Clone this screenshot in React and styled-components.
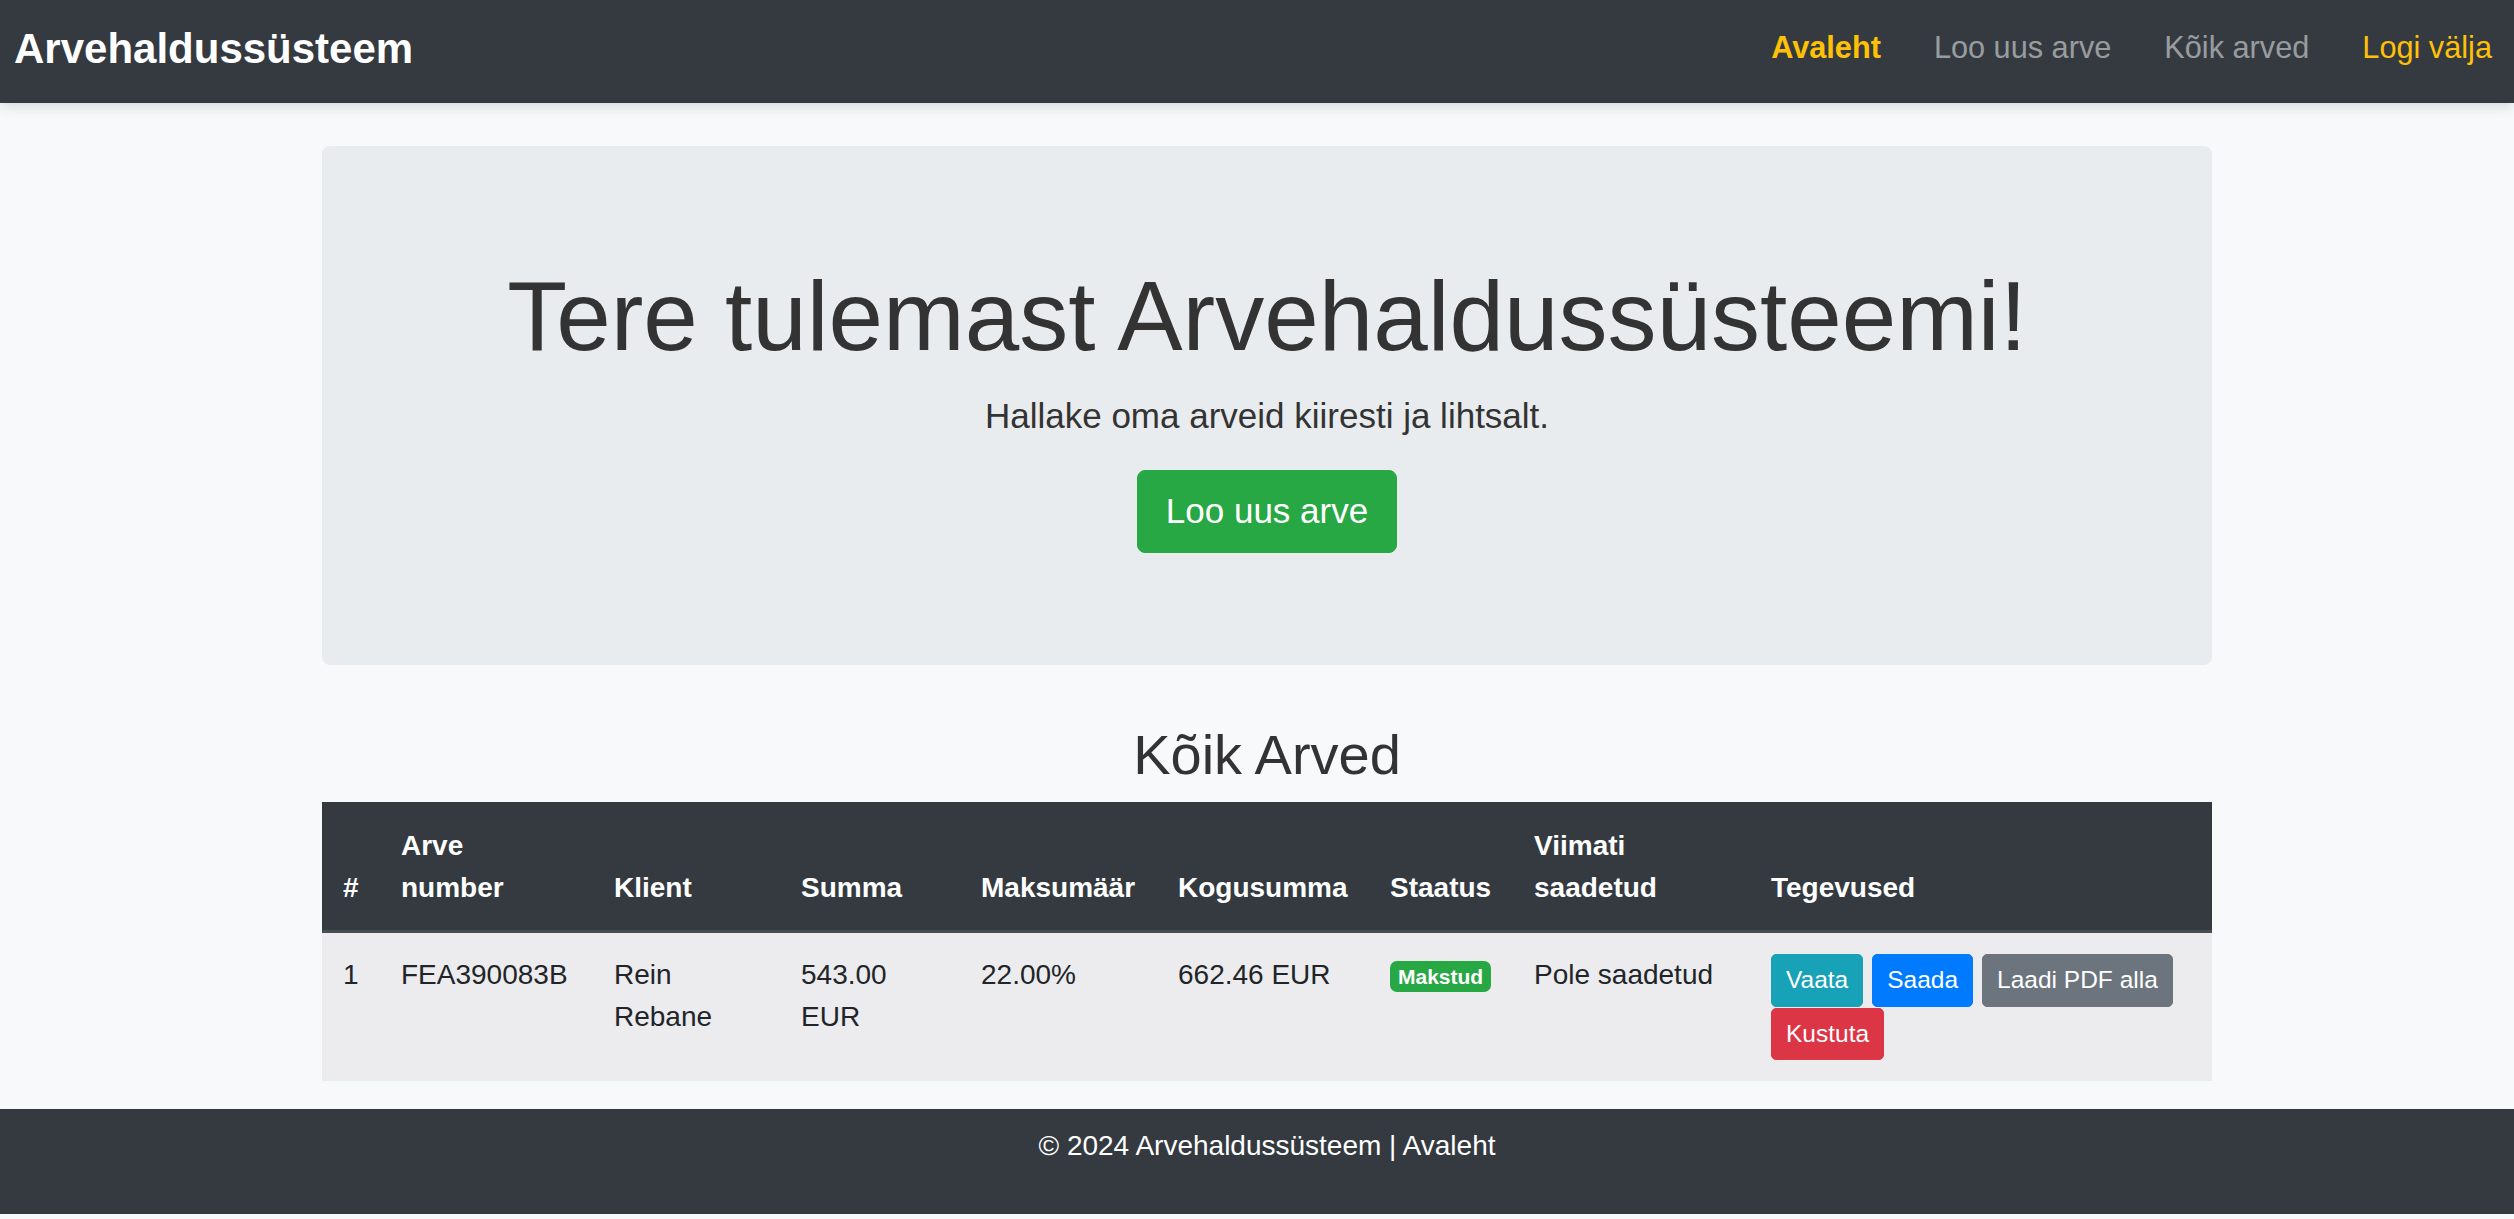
import React from 'react'
import styled, { createGlobalStyle } from 'styled-components'

const GlobalStyle = createGlobalStyle`
  * { box-sizing: border-box; }
  body {
    margin: 0;
    background: #f8f9fa;
    color: #212529;
    font-family: "Liberation Sans", Arial, sans-serif;
    font-size: 28px;
    line-height: 1.5;
  }
`

const Navbar = styled.nav`
  height: 103px;
  display: flex;
  align-items: center;
  justify-content: space-between;
  padding: 0 22px 6px 14px;
  background: #343a40;
  box-shadow: 0 4px 12px rgba(0, 0, 0, 0.12);
  position: relative;
  z-index: 1;
`

const Brand = styled.a`
  color: #fff;
  font-size: 42px;
  font-weight: 700;
  text-decoration: none;
  line-height: 1.5;
`

const NavLinks = styled.div`
  display: flex;
  align-items: center;
  gap: 53px;
`

const NavLink = styled.a`
  font-size: 30.7px;
  text-decoration: none;
  color: ${(p) => (p.$accent ? '#ffc107' : 'rgba(255, 255, 255, 0.5)')};
  font-weight: ${(p) => (p.$active ? 700 : 400)};
`

const Main = styled.main`
  margin: 43px 302px 0 322px;
`

const Jumbotron = styled.section`
  background: #e9ecef;
  border-radius: 8px;
  padding: 112px 56px;
  margin-bottom: 56px;
  text-align: center;
  color: #333;
`

const Title = styled.h1`
  margin: 0 0 14px;
  font-size: 98px;
  font-weight: 300;
  line-height: 1.2;
`

const Lead = styled.p`
  margin: 0 0 28px;
  font-size: 35px;
  line-height: 1.5;
`

const BigButton = styled.a`
  display: inline-block;
  padding: 14px 28px;
  border: 1px solid #28a745;
  border-radius: 8px;
  background: #28a745;
  color: #fff;
  font-size: 35px;
  line-height: 1.5;
  text-decoration: none;
`

const SectionTitle = styled.h2`
  margin: 0 0 14px;
  font-size: 56px;
  font-weight: 400;
  line-height: 1.2;
  text-align: center;
  color: #333;
`

const Table = styled.table`
  width: 100%;
  table-layout: fixed;
  border-collapse: collapse;
  margin-bottom: 28px;
`

const Th = styled.th`
  width: ${(p) => p.$w}px;
  padding: 21px;
  text-align: left;
  vertical-align: bottom;
  color: #fff;
  background: #343a40;
  font-weight: 700;
  border-top: 2px solid #343a40;
  border-bottom: 3px solid #454d55;
`

const Row = styled.tr`
  background: #ececee;
`

const Td = styled.td`
  padding: 21px;
  vertical-align: top;
  color: #212529;
`

const Badge = styled.span`
  display: inline-block;
  padding: 5px 8px;
  border-radius: 7px;
  background: #28a745;
  color: #fff;
  font-size: 21px;
  font-weight: 700;
  line-height: 1;
`

const Actions = styled.div`
  display: flex;
  flex-wrap: wrap;
  column-gap: 9px;
  row-gap: 1px;
`

const SmallButton = styled.a`
  display: inline-block;
  padding: 7px 14px;
  border: 1px solid ${(p) => p.$bg};
  border-radius: 5px;
  background: ${(p) => p.$bg};
  color: #fff;
  font-size: 24.5px;
  line-height: 1.5;
  text-decoration: none;
`

const Footer = styled.footer`
  background: #343a40;
  color: #fff;
  text-align: center;
  padding: 16px 0 19px 20px;
  margin-bottom: 7px;
`

const FooterText = styled.p`
  margin: 0 0 28px;
`

const columns = [
  ['#', 58],
  [<>Arve<br />number</>, 213],
  ['Klient', 187],
  ['Summa', 180],
  ['Maksumäär', 197],
  ['Kogusumma', 212],
  ['Staatus', 144],
  ['Viimati saadetud', 237],
  ['Tegevused', 462],
]

const invoices = [
  {
    id: 1,
    number: 'FEA390083B',
    client: 'Rein Rebane',
    sum: '543.00 EUR',
    rate: '22.00%',
    total: '662.46 EUR',
    status: 'Makstud',
    sent: 'Pole saadetud',
  },
]

const App = () => {
  return (
    <>
      <GlobalStyle />
      <Navbar>
        <Brand href="#">Arvehaldussüsteem</Brand>
        <NavLinks>
          <NavLink href="#" $accent $active>Avaleht</NavLink>
          <NavLink href="#">Loo uus arve</NavLink>
          <NavLink href="#">Kõik arved</NavLink>
          <NavLink href="#" $accent>Logi välja</NavLink>
        </NavLinks>
      </Navbar>

      <Main>
        <Jumbotron>
          <Title>Tere tulemast Arvehaldussüsteemi!</Title>
          <Lead>Hallake oma arveid kiiresti ja lihtsalt.</Lead>
          <BigButton href="#">Loo uus arve</BigButton>
        </Jumbotron>

        <SectionTitle>Kõik Arved</SectionTitle>
        <Table>
          <thead>
            <tr>
              {columns.map(([label, w], i) => (
                <Th key={i} $w={w}>{label}</Th>
              ))}
            </tr>
          </thead>
          <tbody>
            {invoices.map((inv) => (
              <Row key={inv.id}>
                <Td>{inv.id}</Td>
                <Td>{inv.number}</Td>
                <Td>{inv.client}</Td>
                <Td>{inv.sum}</Td>
                <Td>{inv.rate}</Td>
                <Td>{inv.total}</Td>
                <Td><Badge>{inv.status}</Badge></Td>
                <Td>{inv.sent}</Td>
                <Td>
                  <Actions>
                    <SmallButton href="#" $bg="#17a2b8">Vaata</SmallButton>
                    <SmallButton href="#" $bg="#007bff">Saada</SmallButton>
                    <SmallButton href="#" $bg="#6c757d">Laadi PDF alla</SmallButton>
                    <SmallButton href="#" $bg="#dc3545">Kustuta</SmallButton>
                  </Actions>
                </Td>
              </Row>
            ))}
          </tbody>
        </Table>
      </Main>

      <Footer>
        <FooterText>© 2024 Arvehaldussüsteem | Avaleht</FooterText>
      </Footer>
    </>
  )
}

export default App
